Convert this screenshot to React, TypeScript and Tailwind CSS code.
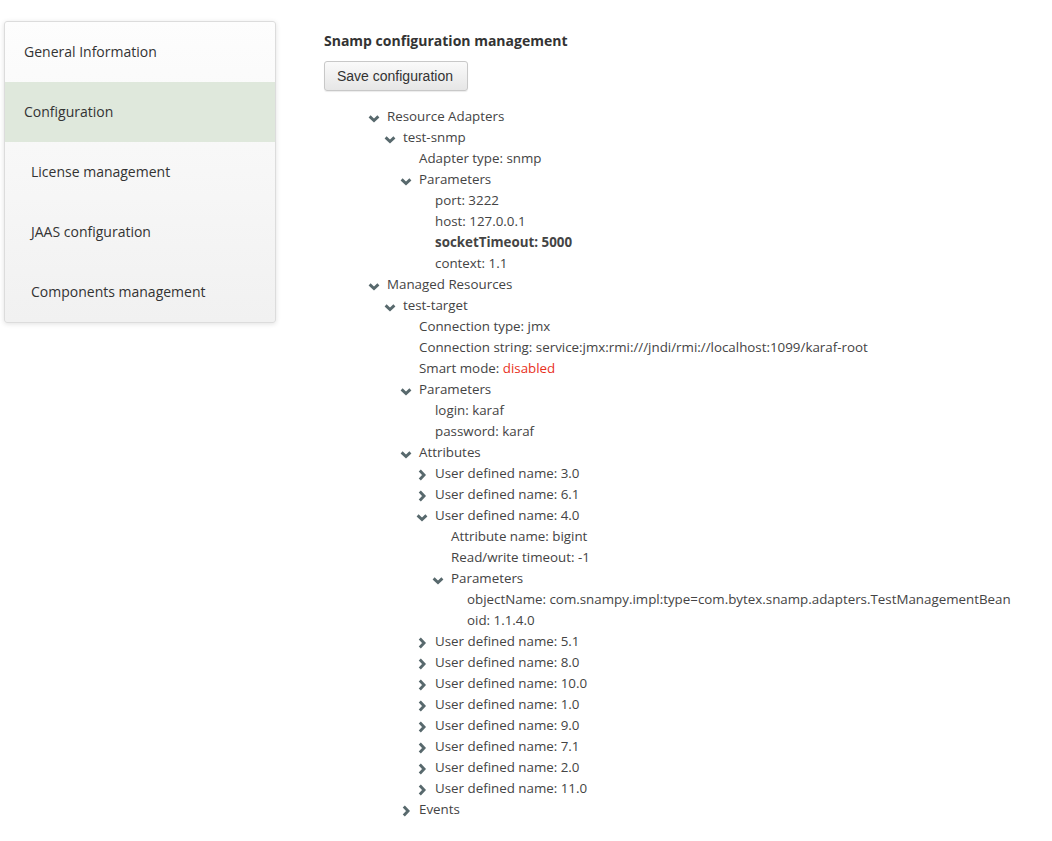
import React from "react";

type Node = {
  label: React.ReactNode;
  children?: Node[];
  open?: boolean;
};

const Chevron = ({ open }: { open: boolean }) =>
  open ? (
    <svg width="12" height="12" viewBox="0 0 12 12" className="shrink-0 mt-[4px]">
      <path d="M1.6 3.4 L6 7.6 L10.4 3.4" fill="none" stroke="#58696d" strokeWidth="2.9" />
    </svg>
  ) : (
    <svg width="12" height="12" viewBox="0 0 12 12" className="shrink-0 mt-[2px]">
      <path d="M3.8 1.6 L8 6 L3.8 10.4" fill="none" stroke="#58696d" strokeWidth="2.9" />
    </svg>
  );

const udn = (v: string): Node => ({ label: `User defined name: ${v}`, children: [], open: false });

const tree: Node[] = [
  {
    label: "Resource Adapters",
    open: true,
    children: [
      {
        label: "test-snmp",
        open: true,
        children: [
          { label: "Adapter type: snmp" },
          {
            label: "Parameters",
            open: true,
            children: [
              { label: "port: 3222" },
              { label: "host: 127.0.0.1" },
              { label: <span className="font-bold">socketTimeout: 5000</span> },
              { label: "context: 1.1" },
            ],
          },
        ],
      },
    ],
  },
  {
    label: "Managed Resources",
    open: true,
    children: [
      {
        label: "test-target",
        open: true,
        children: [
          { label: "Connection type: jmx" },
          { label: "Connection string: service:jmx:rmi:///jndi/rmi://localhost:1099/karaf-root" },
          {
            label: (
              <span>
                Smart mode: <span className="text-[#e8301c]">disabled</span>
              </span>
            ),
          },
          {
            label: "Parameters",
            open: true,
            children: [{ label: "login: karaf" }, { label: "password: karaf" }],
          },
          {
            label: "Attributes",
            open: true,
            children: [
              udn("3.0"),
              udn("6.1"),
              {
                label: "User defined name: 4.0",
                open: true,
                children: [
                  { label: "Attribute name: bigint" },
                  { label: "Read/write timeout: -1" },
                  {
                    label: "Parameters",
                    open: true,
                    children: [
                      { label: "objectName: com.snampy.impl:type=com.bytex.snamp.adapters.TestManagementBean" },
                      { label: "oid: 1.1.4.0" },
                    ],
                  },
                ],
              },
              udn("5.1"),
              udn("8.0"),
              udn("10.0"),
              udn("1.0"),
              udn("9.0"),
              udn("7.1"),
              udn("2.0"),
              udn("11.0"),
            ],
          },
          { label: "Events", children: [], open: false },
        ],
      },
    ],
  },
];

const TreeNode = ({ node }: { node: Node }) => {
  const hasKids = node.children !== undefined;
  return (
    <li>
      <div className="flex items-center h-[21px] whitespace-nowrap">
        <span className="w-[18px] h-[21px] shrink-0 flex items-center -ml-px">
          {hasKids ? <Chevron open={!!node.open} /> : null}
        </span>
        <span className="ml-px">{node.label}</span>
      </div>
      {hasKids && node.open && node.children!.length > 0 && (
        <ul className="pl-4">
          {node.children!.map((c, i) => (
            <TreeNode key={i} node={c} />
          ))}
        </ul>
      )}
    </li>
  );
};

export default function App() {
  const items = [
    { label: "General Information", pl: "pl-[19px]", active: false },
    { label: "Configuration", pl: "pl-[19px]", active: true },
    { label: "License management", pl: "pl-[26px]", active: false },
    { label: "JAAS configuration", pl: "pl-[26px]", active: false },
    { label: "Components management", pl: "pl-[26px]", active: false },
  ];
  return (
    <div
      className="min-h-[841px] bg-white flex items-start text-[#333]"
      style={{ fontFamily: '"Open Sans", sans-serif' }}
    >
      <nav className="ml-1 mt-[21px] w-[272px] rounded-[3px] border border-[#dcdcdc] bg-gradient-to-b from-[#fdfdfd] to-[#f1f1f1] shadow-[0_1px_5px_rgba(0,0,0,0.12)] overflow-hidden">
        {items.map((it) => (
          <div
            key={it.label}
            className={`h-[60px] flex items-center pb-px ${it.pl} text-[14px] text-[#333] ${
              it.active ? "bg-[#dfe8dc]" : ""
            }`}
          >
            {it.label}
          </div>
        ))}
      </nav>
      <main className="ml-12 mt-[31px]">
        <h1 className="text-[14px] font-bold leading-[20px] text-[#333]">Snamp configuration management</h1>
        <button
          className="mt-[10px] h-[30px] pl-3 pr-[14px] rounded-[3px] border border-[#c8c8c8] bg-gradient-to-b from-[#fafafa] to-[#e6e6e6] text-[14px] text-[#333] shadow-[0_1px_1px_rgba(0,0,0,0.08)]"
          style={{ fontFamily: '"Liberation Sans", Arial, sans-serif' }}
        >
          Save configuration
        </button>
        <ul className="mt-[15px] ml-[45px] text-[13.35px] text-[#444]">
          {tree.map((n, i) => (
            <TreeNode key={i} node={n} />
          ))}
        </ul>
      </main>
    </div>
  );
}
